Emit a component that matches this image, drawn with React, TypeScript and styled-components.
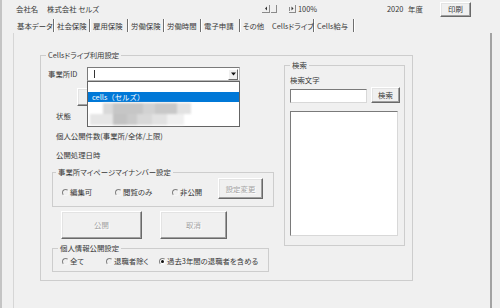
import React from "react";
import styled, { createGlobalStyle } from "styled-components";

const Global = createGlobalStyle`
  html, body { margin: 0; padding: 0; background: #f0f0f0; }
  body {
    font-family: "Noto Sans CJK JP", "Noto Sans", sans-serif;
    font-size: 7.4px;
    color: #383838;
    font-feature-settings: "palt";
  }
  #root { width: 500px; height: 308px; overflow: hidden; }
  * { box-sizing: border-box; }
`;

const Window = styled.div`
  width: 500px;
  height: 308px;
  border-left: 2px solid #c4c4c4;
  display: flex;
  flex-direction: column;
  background: #f0f0f0;
`;

const Header = styled.div`
  height: 17px;
  flex: none;
  display: flex;
  align-items: center;
  padding-left: 14px;
  line-height: 10px;
  white-space: nowrap;
`;

const Cell = styled.div<{ $w: number }>`
  width: ${(p) => p.$w}px;
  flex: none;
  display: flex;
  align-items: center;
`;

const TabBar = styled.div`
  height: 16px;
  flex: none;
  display: flex;
  align-items: center;
  padding-left: 12px;
`;

const Tab = styled.div<{ $w: number; $sep?: boolean; $active?: boolean }>`
  width: ${(p) => p.$w}px;
  height: 13px;
  line-height: 13px;
  flex: none;
  padding-left: ${(p) => (p.$active ? 4 : 3)}px;
  white-space: nowrap;
  border-right: ${(p) => (p.$sep ? "1px solid #6f6f6f" : "none")};
  box-shadow: ${(p) => (p.$sep ? "1px 0 0 #ffffff" : "none")};
`;

const Page = styled.div`
  flex: 1;
  width: 479px;
  margin-left: 11px;
  border-left: 1px solid #d6d6d6;
  border-right: 2px solid #a3a3a3;
  padding: 17px 0 0 26px;
`;

const Group = styled.fieldset<{ $w: number; $h: number; $ml?: number; $mt?: number }>`
  margin: ${(p) => p.$mt ?? 0}px 0 0 ${(p) => p.$ml ?? 0}px;
  padding: 0;
  min-width: 0;
  width: ${(p) => p.$w}px;
  height: ${(p) => p.$h}px;
  flex: none;
  border: 1px solid #cdcdcd;
`;

const Legend = styled.legend<{ $x: number }>`
  margin-left: ${(p) => p.$x}px;
  padding: 0 2px;
  height: 10px;
  line-height: 10px;
  white-space: nowrap;
`;

const Body = styled.div`
  display: flex;
  align-items: flex-start;
`;

const LeftCol = styled.div`
  width: 243px;
  flex: none;
  padding-left: 7px;
  display: flex;
  flex-direction: column;
  align-items: flex-start;
`;

const IdRow = styled.div`
  position: relative;
  margin-top: 7px;
  height: 14px;
  display: flex;
  align-items: center;
  z-index: 2;
`;

const Label = styled.div<{ $w?: number; $mt?: number; $ml?: number }>`
  width: ${(p) => (p.$w ? `${p.$w}px` : "auto")};
  margin-top: ${(p) => p.$mt ?? 0}px;
  margin-left: ${(p) => p.$ml ?? 0}px;
  height: 10px;
  line-height: 10px;
  white-space: nowrap;
  flex: none;
`;

const Sunken = styled.div<{ $w: number; $h: number; $mt?: number; $ml?: number }>`
  width: ${(p) => p.$w}px;
  height: ${(p) => p.$h}px;
  margin-top: ${(p) => p.$mt ?? 0}px;
  margin-left: ${(p) => p.$ml ?? 0}px;
  flex: none;
  background: #ffffff;
  border: 1px solid;
  border-color: #7a7a7a #d8d8d8 #d8d8d8 #7a7a7a;
`;

const Combo = styled.div`
  position: relative;
  width: 153px;
  height: 14px;
  flex: none;
  background: #fff;
  border: 1px solid;
  border-color: #7a7a7a #b8b8b8 #b8b8b8 #7a7a7a;
  display: flex;
  align-items: center;
  padding: 0 1px 0 6px;
`;

const Caret = styled.div`
  width: 1px;
  height: 8px;
  background: #333;
`;

const DropBtn = styled.div`
  margin-left: auto;
  width: 10px;
  height: 11px;
  background: #f0f0f0;
  border: 1px solid;
  border-color: #fff #696969 #696969 #fff;
  display: flex;
  align-items: center;
  justify-content: center;
`;

const DropList = styled.div`
  position: absolute;
  left: 39px;
  top: 14px;
  width: 153px;
  height: 46px;
  background: #fff;
  border: 1px solid #646464;
  display: flex;
  flex-direction: column;
`;

const ListItem = styled.div<{ $sel?: boolean }>`
  height: 10px;
  line-height: 10px;
  padding-left: 4px;
  background: ${(p) => (p.$sel ? "#0078d7" : "transparent")};
  color: ${(p) => (p.$sel ? "#fff" : "#222")};
  white-space: nowrap;
  font-feature-settings: normal;
`;

const BlurArea = styled.div`
  display: flex;
  flex-direction: column;
  filter: blur(1.2px);
  padding-top: 1px;
`;

const BlurRow = styled.div<{ $ml: number }>`
  display: flex;
  height: 11px;
  margin-left: ${(p) => p.$ml}px;
`;

const BlurBlock = styled.div<{ $w: number; $c: string }>`
  width: ${(p) => p.$w}px;
  background: ${(p) => p.$c};
`;

const Button = styled.button<{ $w: number; $h: number; $ml?: number; $mt?: number; $off?: boolean }>`
  width: ${(p) => p.$w}px;
  height: ${(p) => p.$h}px;
  margin: ${(p) => p.$mt ?? 0}px 0 0 ${(p) => p.$ml ?? 0}px;
  padding: 0;
  flex: none;
  font: inherit;
  line-height: 10px;
  background: #f0f0f0;
  border: 1px solid;
  border-color: #ffffff #696969 #696969 #ffffff;
  box-shadow: inset -1px -1px 0 #a0a0a0, inset 1px 1px 0 #e3e3e3;
  color: ${(p) => (p.$off ? "#a3a3a3" : "#383838")};
  text-shadow: ${(p) => (p.$off ? "1px 1px 0 #ffffff" : "none")};
`;

const Row = styled.div<{ $mt?: number; $ml?: number; $h: number }>`
  display: flex;
  align-items: flex-start;
  margin-top: ${(p) => p.$mt ?? 0}px;
  margin-left: ${(p) => p.$ml ?? 0}px;
  height: ${(p) => p.$h}px;
  flex: none;
`;

const Option = styled.div<{ $w: number; $mt: number }>`
  width: ${(p) => p.$w}px;
  margin-top: ${(p) => p.$mt}px;
  display: flex;
  align-items: center;
  height: 10px;
  line-height: 10px;
  white-space: nowrap;
  flex: none;
`;

const Radio = styled.span<{ $on?: boolean }>`
  width: 7px;
  height: 7px;
  border-radius: 50%;
  border: 1px solid;
  border-color: #808080 #f6f6f6 #f6f6f6 #808080;
  background: ${(p) => (p.$on ? "#ffffff" : "transparent")};
  margin-right: 1px;
  display: flex;
  align-items: center;
  justify-content: center;
  flex: none;
  &::after {
    content: "";
    width: 3px;
    height: 3px;
    border-radius: 50%;
    background: ${(p) => (p.$on ? "#111" : "transparent")};
  }
`;

const SearchBody = styled.div`
  padding-left: 5px;
  display: flex;
  flex-direction: column;
  align-items: flex-start;
`;

const NavIcons = () => (
  <svg width="36" height="10" viewBox="0 0 36 10">
    <path d="M7.5 1v7M0 8.5h8" stroke="#8a8a8a" strokeWidth="1" fill="none" />
    <path d="M3 4.5L5 2.5v4z" fill="#333" />
    <path d="M14.5 1v7M9 8.5h6" stroke="#8a8a8a" strokeWidth="1" fill="none" />
    <path d="M33.5 1v7M27 8.5h7M27.5 3v4" stroke="#8a8a8a" strokeWidth="1" fill="none" />
    <path d="M29.5 2.5l2 2-2 2z" fill="#333" />
  </svg>
);

const Arrow = () => (
  <svg width="5" height="4" viewBox="0 0 5 4">
    <path d="M0 0.5h5L2.5 3.5z" fill="#111" />
  </svg>
);

const tabs: { t: string; w: number; sep: boolean; active?: boolean }[] = [
  { t: "基本データ", w: 40, sep: true },
  { t: "社会保険", w: 36, sep: true },
  { t: "雇用保険", w: 38, sep: true },
  { t: "労働保険", w: 36, sep: true },
  { t: "労働時間", w: 37, sep: true },
  { t: "電子申請", w: 39, sep: true },
  { t: "その他", w: 28, sep: false },
  { t: "Cellsドライブ", w: 46, sep: true, active: true },
  { t: "Cells給与", w: 40, sep: true },
];

export default function App() {
  return (
    <>
      <Global />
      <Window>
        <Header>
          <Cell $w={31}>会社名</Cell>
          <Cell $w={215}>株式会社 セルズ</Cell>
          <Cell $w={36}>
            <NavIcons />
          </Cell>
          <Cell $w={89}>100%</Cell>
          <Cell $w={21}>2020</Cell>
          <Cell $w={32}>年度</Cell>
          <Button $w={31} $h={15} $mt={1}>
            印刷
          </Button>
        </Header>
        <TabBar>
          {tabs.map((t) => (
            <Tab key={t.t} $w={t.w} $sep={t.sep} $active={t.active}>
              {t.t}
            </Tab>
          ))}
        </TabBar>
        <Page>
          <Group $w={373} $h={231}>
            <Legend $x={5}>Cellsドライブ利用設定</Legend>
            <Body>
              <LeftCol>
                <IdRow>
                  <Label $w={39}>事業所ID</Label>
                  <Combo>
                    <Caret />
                    <DropBtn>
                      <Arrow />
                    </DropBtn>
                  </Combo>
                  <DropList>
                    <ListItem />
                    <ListItem $sel>cells（セルズ）</ListItem>
                    <BlurArea>
                      <BlurRow $ml={15}>
                        <BlurBlock $w={10} $c="#d9d9d9" />
                        <BlurBlock $w={30} $c="#c6c6c6" />
                        <BlurBlock $w={12} $c="#d2d2d2" />
                        <BlurBlock $w={22} $c="#c8c8c8" />
                        <BlurBlock $w={14} $c="#e2e2e2" />
                      </BlurRow>
                      <BlurRow $ml={2}>
                        <BlurBlock $w={23} $c="#e6e6e6" />
                        <BlurBlock $w={14} $c="#c2c2c2" />
                        <BlurBlock $w={10} $c="#cacaca" />
                        <BlurBlock $w={15} $c="#d8d8d8" />
                        <BlurBlock $w={15} $c="#e2e2e2" />
                        <BlurBlock $w={17} $c="#f0f0f0" />
                      </BlurRow>
                    </BlurArea>
                  </DropList>
                </IdRow>
                <Button $w={80} $h={18} $mt={7} $ml={29} />
                <Label $mt={5} $ml={8}>
                  状態
                </Label>
                <Label $mt={10} $ml={8}>
                  個人公開件数(事業所/全体/上限)
                </Label>
                <Label $mt={9} $ml={8}>
                  公開処理日時
                </Label>
                <Group $w={222} $h={40} $ml={4} $mt={7}>
                  <Legend $x={3}>事業所マイページマイナンバー設定</Legend>
                  <Row $h={23} $ml={9} $mt={1}>
                    <Option $w={53} $mt={9}>
                      <Radio />
                      編集可
                    </Option>
                    <Option $w={57} $mt={9}>
                      <Radio />
                      閲覧のみ
                    </Option>
                    <Option $w={46} $mt={9}>
                      <Radio />
                      非公開
                    </Option>
                    <Button $w={45} $h={21} $off>
                      設定変更
                    </Button>
                  </Row>
                </Group>
                <Row $h={28} $mt={4}>
                  <Button $w={81} $h={28} $ml={13} $off>
                    公開
                  </Button>
                  <Button $w={67} $h={28} $ml={18} $off>
                    取消
                  </Button>
                </Row>
                <Group $w={217} $h={29} $ml={4} $mt={4}>
                  <Legend $x={5}>個人情報公開設定</Legend>
                  <Row $h={16} $ml={9}>
                    <Option $w={44} $mt={3}>
                      <Radio />
                      全て
                    </Option>
                    <Option $w={53} $mt={3}>
                      <Radio />
                      退職者除く
                    </Option>
                    <Option $w={100} $mt={3}>
                      <Radio $on />
                      過去3年間の退職者を含める
                    </Option>
                  </Row>
                </Group>
              </LeftCol>
              <Group $w={121} $h={186}>
                <Legend $x={5}>検索</Legend>
                <SearchBody>
                  <Label $mt={5}>検索文字</Label>
                  <Row $h={16} $mt={2}>
                    <Sunken $w={77} $h={14} $mt={2} />
                    <Button $w={29} $h={16} $ml={4}>
                      検索
                    </Button>
                  </Row>
                  <Sunken $w={108} $h={125} $mt={8} />
                </SearchBody>
              </Group>
            </Body>
          </Group>
        </Page>
      </Window>
    </>
  );
}
